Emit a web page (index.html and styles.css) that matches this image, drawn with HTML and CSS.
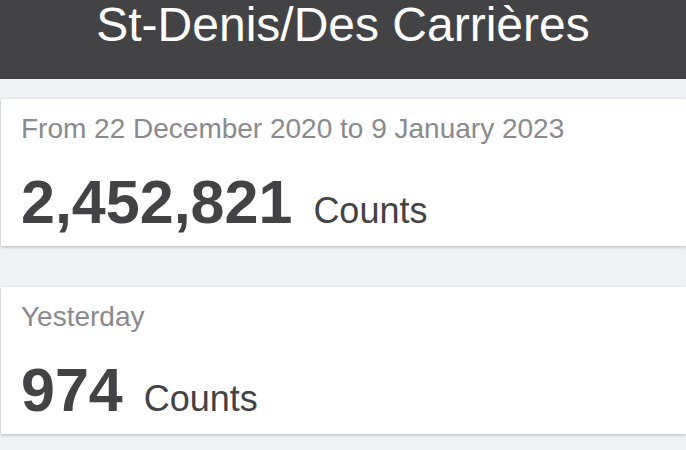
FILE: index.html
```html
<!DOCTYPE html>
<html>
<head>
<meta charset="utf-8">
<link rel="stylesheet" href="styles.css">
</head>
<body>
<header class="header"><h1 class="title">St-Denis/Des Carrières</h1></header>
<main class="list">
  <section class="card">
    <div class="label">From 22 December 2020 to 9 January 2023</div>
    <div class="value"><span class="num">2,452,821</span><span class="unit">Counts</span></div>
  </section>
  <section class="card">
    <div class="label">Yesterday</div>
    <div class="value"><span class="num">974</span><span class="unit">Counts</span></div>
  </section>
</main>
</body>
</html>
```
FILE: styles.css
```css
html, body { margin: 0; padding: 0; }
body {
  background: #f0f1f5;
  font-family: "Liberation Sans", Arial, sans-serif;
  width: 686px;
  height: 450px;
  overflow: hidden;
}
.header {
  background: #434345;
  height: 79px;
  display: flex;
  justify-content: center;
}
.title {
  margin: 0;
  color: #fff;
  font-weight: normal;
  font-size: 48px;
  line-height: 50px;
}
.list {
  display: flex;
  flex-direction: column;
  gap: 41px;
  padding-top: 20px;
}
.card {
  background: #fff;
  margin-left: 1px;
  height: 147px;
  box-shadow: 0 1px 3px rgba(0,0,0,0.25);
  padding: 0 20px;
  box-sizing: border-box;
}
.label {
  color: #8a8a8e;
  font-size: 28px;
  padding-top: 13px;
  line-height: 34px;
}
.value {
  display: flex;
  align-items: baseline;
  color: #434345;
  margin-top: 26px;
}
.num {
  font-weight: bold;
  font-size: 61px;
  line-height: 60px;
}
.unit {
  font-size: 36px;
  margin-left: 21px;
}
```
